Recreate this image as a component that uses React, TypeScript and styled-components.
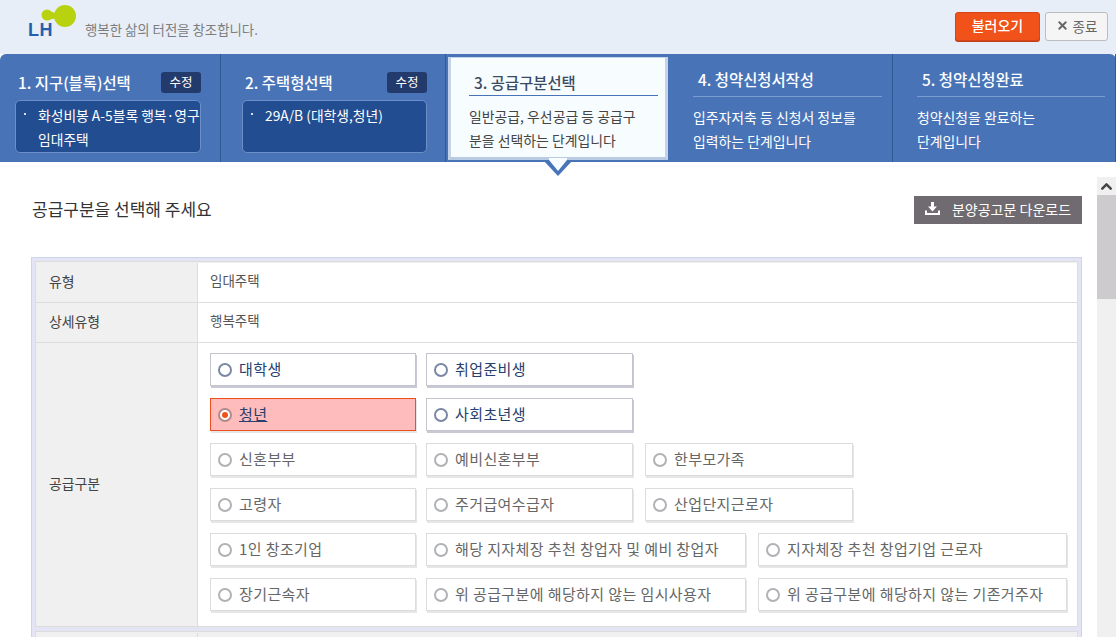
import React from 'react';
import styled, { createGlobalStyle } from 'styled-components';
import { X, ChevronUp } from 'lucide-react';

const GlobalStyle = createGlobalStyle`
  html, body {
    margin: 0;
    padding: 0;
    height: 100%;
    overflow: hidden;
    background: #fff;
  }
  * {
    box-sizing: border-box;
  }
  body {
    font-family: "Noto Sans CJK KR", "Noto Sans", sans-serif;
    font-size: 14px;
    color: #444;
  }
`;

const Page = styled.div`
  width: 1116px;
  height: 637px;
  display: flex;
  flex-direction: column;
  overflow: hidden;
`;

const Header = styled.header`
  height: 54px;
  flex: none;
  background: #e7eef7;
  display: flex;
  align-items: flex-start;
  padding: 5px 8px 0 28px;
`;

const Logo = styled.div`
  position: relative;
  width: 57px;
  height: 36px;
`;

const LogoMark = styled.svg`
  position: absolute;
  left: 13px;
  top: 0;
`;

const LogoText = styled.span`
  position: absolute;
  left: 0;
  bottom: 2px;
  font-family: "Liberation Sans", sans-serif;
  font-size: 18px;
  line-height: 18px;
  font-weight: 700;
  color: #2260ad;
  letter-spacing: 0.6px;
`;

const Tagline = styled.span`
  margin: 14px 0 0 0;
  font-size: 13.4px;
  line-height: 20px;
  color: #7d7d7d;
`;

const HeaderActions = styled.div`
  margin-left: auto;
  display: flex;
  gap: 5px;
  padding-top: 7px;
`;

const LoadButton = styled.button`
  width: 85px;
  height: 29px;
  padding: 0 0 3px;
  border: 1px solid #d8431a;
  border-radius: 3px;
  background: #f0521a;
  box-shadow: 0 1px 0 #b9441c;
  color: #fff;
  font: 500 14px "Noto Sans CJK KR", sans-serif;
`;

const CloseButton = styled.button`
  width: 63px;
  height: 29px;
  padding: 0 0 2px;
  border: 1px solid #bdbdbd;
  border-radius: 3px;
  background: #f5f5f5;
  color: #666;
  font: 400 13.5px "Noto Sans CJK KR", sans-serif;
  display: flex;
  align-items: center;
  justify-content: center;
  gap: 4px;
`;

const Steps = styled.nav`
  position: relative;
  height: 108px;
  flex: none;
  display: flex;
  background: #4874b7;
  border-radius: 6px 6px 0 0;
  color: #fff;
`;

const Step = styled.div<{ $width: number; $inset: number }>`
  width: ${(p) => p.$width}px;
  flex: none;
  padding: 15px 10px 0 ${(p) => p.$inset}px;
  border-right: 1px solid #2f5a97;
`;

const EditableStep = styled.div<{ $width: number; $inset: number; $right: number }>`
  width: ${(p) => p.$width}px;
  flex: none;
  padding: 14px ${(p) => p.$right}px 0 ${(p) => p.$inset}px;
  border-right: 1px solid #2f5a97;
`;

const StepHead = styled.div`
  height: 28px;
  margin-bottom: 4px;
  display: flex;
  align-items: center;
  justify-content: space-between;
  padding-left: 3px;
`;

const StepTitle = styled.div`
  font-size: 15.4px;
  font-weight: 500;
  line-height: 20px;
`;

const EditTag = styled.span`
  width: 40px;
  height: 21px;
  border-radius: 3px;
  background: #233a6c;
  font-size: 12.5px;
  line-height: 20px;
  text-align: center;
`;

const Picked = styled.div`
  height: 53px;
  padding: 2px 0 0 22px;
  position: relative;
  background: #224d90;
  border: 1px solid #6c8fc8;
  border-radius: 5px;
  font-size: 13.8px;
  line-height: 24px;
  white-space: pre;

  &::before {
    content: '';
    position: absolute;
    left: 8px;
    top: 12px;
    width: 2px;
    height: 2px;
    background: #d5e0f2;
  }
`;

const ActiveStep = styled.div`
  position: relative;
  width: 220px;
  height: 103px;
  flex: none;
  margin: 3px 0 0 2px;
  padding: 14px 7px 0 18px;
  background: #f7fcff;
  border: 3px solid #c5d3e8;
  border-top-width: 1px;
  border-bottom-color: #b9cae3;
  color: #444;
`;

const ActiveTitle = styled(StepTitle)`
  color: #3a4a63;
  padding: 0 0 3px 5px;
  border-bottom: 1px solid #4874b7;
`;

const Pointer = styled.svg`
  position: absolute;
  left: 92px;
  top: 100px;
`;

const PlainTitle = styled(StepTitle)`
  padding: 0 0 7px 5px;
  border-bottom: 1px solid #7b9ccf;
`;

const StepDesc = styled.p`
  margin: 8px 0 0;
  font-size: 13.9px;
  line-height: 24px;
  width: 178px;
`;

const Body = styled.div`
  flex: 1;
  min-height: 0;
  display: flex;
`;

const Content = styled.main`
  flex: 1;
  min-width: 0;
  padding: 34px 15px 0 31px;
  overflow: hidden;
`;

const TitleRow = styled.div`
  display: flex;
  align-items: center;
  justify-content: space-between;
  height: 28px;
  margin-bottom: 33px;
`;

const PageTitle = styled.h2`
  margin: 0 0 3px 1px;
  font-size: 17px;
  font-weight: 400;
  color: #333;
`;

const DownloadButton = styled.button`
  width: 168px;
  height: 28px;
  padding: 0 0 3px;
  border: 0;
  background: #6f6b70;
  color: #fff;
  font: 400 14px "Noto Sans CJK KR", sans-serif;
  display: flex;
  align-items: center;
  justify-content: center;
  gap: 12px;
`;

const Frame = styled.div`
  padding: 3px;
  display: flex;
  flex-direction: column;
  gap: 4px;
  background: #e3e5f4;
  border: 1px solid #d0d4e8;
  border-bottom: 0;
`;

const Section = styled.div`
  background: #fff;
  border: 1px solid #dcdcdc;
`;

const Row = styled.div`
  display: flex;
  border-top: 1px solid #dcdcdc;

  &:first-child {
    border-top: 0;
    padding-top: 1px;
    background: #f0f0f0;
  }
`;

const Label = styled.div`
  width: 162px;
  flex: none;
  padding: 0 0 4px 13px;
  display: flex;
  align-items: center;
  background: #f0f0f0;
  border-right: 1px solid #dcdcdc;
  font-size: 13.9px;
  color: #444;
`;

const Value = styled.div`
  flex: 1;
  height: 39px;
  padding: 0 0 5px 12px;
  display: flex;
  align-items: center;
  font-size: 13.5px;
  background: #fff;
  color: #555;
`;

const OptionArea = styled.div`
  flex: 1;
  padding: 10px 0 15px 12px;
  display: flex;
  flex-direction: column;
  gap: 12px;
`;

const OptionRow = styled.div`
  display: flex;
  gap: 10px;

  & > :nth-child(3) {
    margin-left: 2px;
  }
`;

const Option = styled.label<{ $width: number; $state: 'on' | 'open' | 'off' }>`
  width: ${(p) => p.$width}px;
  height: 33px;
  padding: 0 0 2px 7px;
  display: flex;
  align-items: center;
  gap: 7px;
  font-size: 15px;
  letter-spacing: 0.4px;
  background: ${(p) => (p.$state === 'on' ? '#ffbcbc' : '#fff')};
  border: 1px solid ${(p) => (p.$state === 'on' ? '#ee4f1d' : p.$state === 'open' ? '#c4c4cc' : '#dcdcdc')};
  box-shadow: 1px 2px 0 ${(p) => (p.$state === 'open' ? '#c9c9d6' : '#e6e6e6')};
  color: ${(p) => (p.$state === 'off' ? '#666' : '#24406f')};
  text-decoration: ${(p) => (p.$state === 'on' ? 'underline' : 'none')};
`;

const Radio = styled.span<{ $state: 'on' | 'open' | 'off' }>`
  width: 14px;
  height: 14px;
  flex: none;
  margin-top: 2px;
  border-radius: 50%;
  background: #fff;
  border: 2px solid ${(p) => (p.$state === 'on' ? '#b08a88' : p.$state === 'open' ? '#7a88a5' : '#b0b2b6')};
  display: flex;
  align-items: center;
  justify-content: center;

  &::after {
    content: '';
    width: 6px;
    height: 6px;
    border-radius: 50%;
    background: ${(p) => (p.$state === 'on' ? '#f0521a' : 'transparent')};
  }
`;

const Scrollbar = styled.div`
  width: 19px;
  flex: none;
  margin-top: 15px;
  display: flex;
  flex-direction: column;
  background: #f0f0f0;
`;

const ScrollArrow = styled.div`
  height: 18px;
  display: flex;
  align-items: center;
  justify-content: center;
  color: #444;
`;

const ScrollThumb = styled.div`
  height: 104px;
  background: #cdcbcd;
`;

const EmptyRow = styled.div`
  height: 40px;
`;

type OptionState = 'on' | 'open' | 'off';
interface IOption {
  label: string;
  width: number;
  state: OptionState;
}

const optionRows: IOption[][] = [
  [
    { label: '대학생', width: 206, state: 'open' },
    { label: '취업준비생', width: 207, state: 'open' },
  ],
  [
    { label: '청년', width: 206, state: 'on' },
    { label: '사회초년생', width: 207, state: 'open' },
  ],
  [
    { label: '신혼부부', width: 206, state: 'off' },
    { label: '예비신혼부부', width: 207, state: 'off' },
    { label: '한부모가족', width: 208, state: 'off' },
  ],
  [
    { label: '고령자', width: 206, state: 'off' },
    { label: '주거급여수급자', width: 207, state: 'off' },
    { label: '산업단지근로자', width: 208, state: 'off' },
  ],
  [
    { label: '1인 창조기업', width: 206, state: 'off' },
    { label: '해당 지자체장 추천 창업자 및 예비 창업자', width: 320, state: 'off' },
    { label: '지자체장 추천 창업기업 근로자', width: 309, state: 'off' },
  ],
  [
    { label: '장기근속자', width: 206, state: 'off' },
    { label: '위 공급구분에 해당하지 않는 임시사용자', width: 320, state: 'off' },
    { label: '위 공급구분에 해당하지 않는 기존거주자', width: 309, state: 'off' },
  ],
];

const App = () => {
  return (
    <Page>
      <GlobalStyle />
      <Header>
        <Logo>
          <LogoMark width="40" height="24" viewBox="0 0 40 24">
            <circle cx="6" cy="10" r="5.5" fill="#b9d20f" />
            <path d="M6 6 C12 7 14 8 18 8 L18 13 C14 13 12 14 6 15 Z" fill="#b9d20f" />
            <circle cx="24" cy="11" r="11" fill="#b9d20f" />
          </LogoMark>
          <LogoText>LH</LogoText>
        </Logo>
        <Tagline>행복한 삶의 터전을 창조합니다.</Tagline>
        <HeaderActions>
          <LoadButton>불러오기</LoadButton>
          <CloseButton>
            <X size={13} strokeWidth={3.5} color="#666" />
            종료
          </CloseButton>
        </HeaderActions>
      </Header>

      <Steps>
        <EditableStep $width={221} $inset={15} $right={19}>
          <StepHead>
            <StepTitle>1. 지구(블록)선택</StepTitle>
            <EditTag>수정</EditTag>
          </StepHead>
          <Picked>{'화성비봉 A-5블록 행복·영구\n임대주택'}</Picked>
        </EditableStep>
        <EditableStep $width={225} $inset={21} $right={18}>
          <StepHead>
            <StepTitle>2. 주택형선택</StepTitle>
            <EditTag>수정</EditTag>
          </StepHead>
          <Picked>29A/B (대학생,청년)</Picked>
        </EditableStep>
        <ActiveStep>
          <ActiveTitle>3. 공급구분선택</ActiveTitle>
          <StepDesc>일반공급, 우선공급 등 공급구분을 선택하는 단계입니다</StepDesc>
          <Pointer width="30" height="18" viewBox="0 0 30 18">
            <path d="M0 2 L30 2 L15 18 Z" fill="#4874b7" />
            <path d="M6 0 L24 0 L24 2 L15 13 L6 2 Z" fill="#f7fcff" />
          </Pointer>
        </ActiveStep>
        <Step $width={225} $inset={25}>
          <PlainTitle>4. 청약신청서작성</PlainTitle>
          <StepDesc>입주자저축 등 신청서 정보를 입력하는 단계입니다</StepDesc>
        </Step>
        <Step $width={223} $inset={24}>
          <PlainTitle>5. 청약신청완료</PlainTitle>
          <StepDesc>
            청약신청을 완료하는
            <br />
            단계입니다
          </StepDesc>
        </Step>
      </Steps>

      <Body>
        <Content>
          <TitleRow>
            <PageTitle>공급구분을 선택해 주세요</PageTitle>
            <DownloadButton>
              <svg width="15" height="13" viewBox="0 0 15 13" fill="#fff">
                <path d="M6 0 H9 V4.5 H12 L7.5 9.5 L3 4.5 H6 Z" />
                <path d="M0 8.5 H2 V11 H13 V8.5 H15 V13 H0 Z" />
              </svg>
              분양공고문 다운로드
            </DownloadButton>
          </TitleRow>
          <Frame>
            <Section>
              <Row>
                <Label>유형</Label>
                <Value>임대주택</Value>
              </Row>
              <Row>
                <Label>상세유형</Label>
                <Value>행복주택</Value>
              </Row>
              <Row>
                <Label>공급구분</Label>
                <OptionArea>
                  {optionRows.map((options, index) => (
                    <OptionRow key={index}>
                      {options.map((option) => (
                        <Option key={option.label} $width={option.width} $state={option.state}>
                          <Radio $state={option.state} />
                          {option.label}
                        </Option>
                      ))}
                    </OptionRow>
                  ))}
                </OptionArea>
              </Row>
            </Section>
            <Section>
              <Row>
                <Label />
                <EmptyRow />
              </Row>
            </Section>
          </Frame>
        </Content>
        <Scrollbar>
          <ScrollArrow>
            <ChevronUp size={17} strokeWidth={3.5} />
          </ScrollArrow>
          <ScrollThumb />
        </Scrollbar>
      </Body>
    </Page>
  );
};

export default App;
